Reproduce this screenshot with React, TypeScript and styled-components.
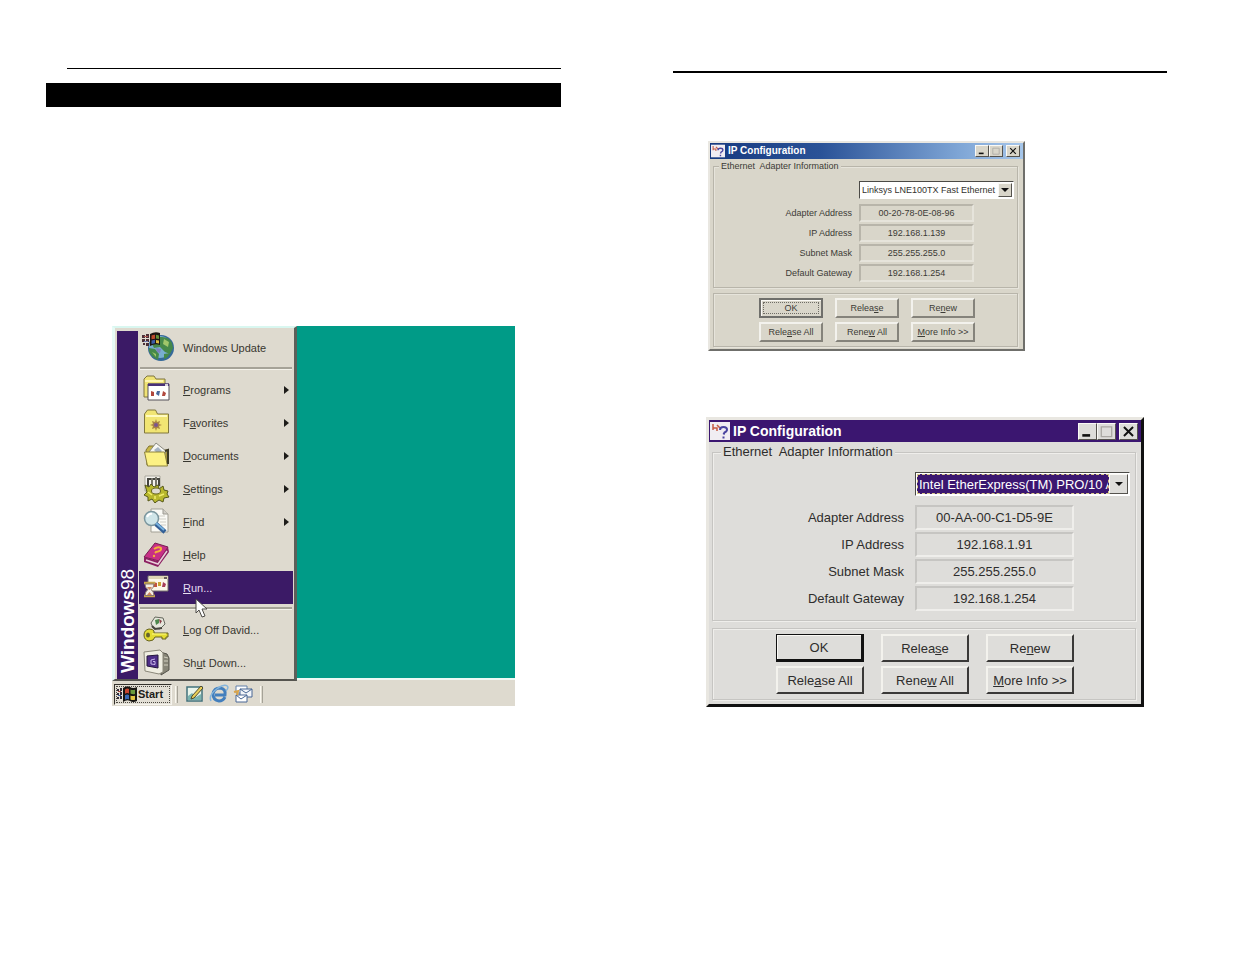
import React from "react";
import styled, { createGlobalStyle, css } from "styled-components";

const GlobalStyle = createGlobalStyle`
  * { box-sizing: border-box; }
  body {
    margin: 0;
    background: #fff;
    color: #2b2b2b;
    font-family: "Liberation Sans", Arial, sans-serif;
  }
  button, input, select { font: inherit; color: inherit; margin: 0; }
`;

/* ---------- document page ---------- */

const Spread = styled.main`
  display: grid;
  grid-template-columns: minmax(0, 515fr) minmax(0, 494fr);
  column-gap: 112px;
  padding: 68px 68px 68px 46px;
`;

const Sheet = styled.section`
  display: flex;
  flex-direction: column;
  align-items: flex-start;
`;

const Rule = styled.hr<{ $weight: number; $indent?: number; $drop?: number }>`
  align-self: stretch;
  border: 0;
  height: ${(p) => p.$weight}px;
  margin: ${(p) => p.$drop ?? 0}px 0 0 ${(p) => p.$indent ?? 0}px;
  background: #000;
`;

const Banner = styled.div`
  align-self: stretch;
  height: 24px;
  margin-top: 14px;
  background: #000;
`;

/* ---------- Windows 98 desktop ---------- */

const Desktop = styled.div`
  width: 403px;
  margin: 219px 0 0 66px;
  background: #009b87;
`;

const Menu = styled.nav`
  position: relative;
  z-index: 1;
  display: flex;
  width: 185px;
  margin-bottom: -3px;
  padding: 3px 1px 0 2px;
  background: #dedacf;
  border-style: solid;
  border-width: 2px 3px 2px 3px;
  border-color: #d9f7f0 #5d5f5a #55544f #e6fbf6;
`;

const MenuStrip = styled.div`
  display: flex;
  width: 21px;
  padding-top: 6px;
  background: #3b1a66;
  color: #fff;
  font-size: 19px;
  line-height: 21px;
  writing-mode: vertical-rl;
  transform: rotate(180deg);
  white-space: nowrap;
`;

const MenuList = styled.ul`
  flex: 1;
  margin: 0;
  padding: 0 0 0 1px;
  list-style: none;
`;

const MenuSeparator = styled.li`
  height: 9px;
  padding: 3px 1px 0;
  &::before {
    content: "";
    display: block;
    height: 2px;
    background: #a5a297;
    border-bottom: 1px solid #f4f2ea;
  }
`;

const MenuButton = styled.button<{ $active?: boolean }>`
  display: flex;
  align-items: center;
  width: 100%;
  height: 33px;
  padding: 0 4px 0 3px;
  border: 0;
  background: ${(p) => (p.$active ? "#3b1a66" : "transparent")};
  color: ${(p) => (p.$active ? "#e6dff2" : "#38372f")};
  font-size: 11px;
  text-align: left;
`;

const IconArt = styled.svg`
  overflow: visible;
`;

const MenuText = styled.span`
  flex: 1;
  padding-left: 11px;
  white-space: nowrap;
`;

const Pointer = styled.svg`
  position: absolute;
  left: 80px;
  top: 270px;
`;

const Taskbar = styled.div`
  display: flex;
  align-items: center;
  height: 28px;
  padding: 2px 2px 0;
  border-top: 2px solid #edfaf5;
  background: #dedacf;
`;

const StartButton = styled.button`
  display: flex;
  align-items: center;
  gap: 1px;
  width: 58px;
  height: 21px;
  padding: 0 2px;
  border: 1px solid #33312c;
  border-right-color: #f6f4ee;
  border-bottom-color: #f6f4ee;
  outline: 1px dotted #4a4842;
  outline-offset: -3px;
  background: #e3dfd5;
  color: #1d1c19;
  font-size: 11px;
  font-weight: 700;
`;

const Divider = styled.span`
  width: 3px;
  height: 17px;
  margin: 0 7px 0 3px;
  border-left: 1px solid #faf8f0;
  border-right: 1px solid #a5a297;
`;

const QuickButton = styled.button`
  width: 20px;
  height: 20px;
  margin-right: 4px;
  padding: 0;
  border: 0;
  background: none;
  svg { display: block; }
`;

/* ---------- IP Configuration window ---------- */

type Metrics = {
  width: number; frame: number; text: number; titleText: number; titleHeight: number;
  icon: number; control: number; controlHeight: number; legend: number; legendPad: number;
  selectTop: number; selectHeight: number; selectWidth: number; selectGap: number;
  label: number; labelGap: number; field: number; row: number; rowGap: number;
  groupEnd: number; groupGap: number; buttonTop: number; buttonLeft: number;
  buttonWidth: number; buttonHeight: number; buttonGap: number; end: number;
  face: string; title: string; edge: string; lowlight: string; groove: string; highlight: string; ink: string;
};

const compact: Metrics = {
  width: 317, frame: 2, text: 9, titleText: 10, titleHeight: 16,
  icon: 14, control: 14, controlHeight: 12, legend: 12, legendPad: 5,
  selectTop: 9, selectHeight: 18, selectWidth: 155, selectGap: 5,
  label: 137, labelGap: 7, field: 115, row: 18, rowGap: 2,
  groupEnd: 5, groupGap: 4, buttonTop: 4, buttonLeft: 45,
  buttonWidth: 64, buttonHeight: 20, buttonGap: 12, end: 2,
  face: "#d9d6ca", title: "linear-gradient(90deg, #173a80 0%, #2a5297 35%, #7fa6d6 80%, #a6c6ea 100%)",
  edge: "#6f6f6b", lowlight: "#85837b", groove: "#b8b5aa", highlight: "#e6e4db", ink: "#3c3b36",
};

const roomy: Metrics = {
  width: 438, frame: 3, text: 13, titleText: 14, titleHeight: 22,
  icon: 20, control: 19, controlHeight: 17, legend: 18, legendPad: 8,
  selectTop: 11, selectHeight: 24, selectWidth: 215, selectGap: 9,
  label: 190, labelGap: 11, field: 159, row: 25, rowGap: 2,
  groupEnd: 9, groupGap: 6, buttonTop: 5, buttonLeft: 63,
  buttonWidth: 88, buttonHeight: 28, buttonGap: 17, end: 4,
  face: "#dedddA", title: "#3b1670",
  edge: "#111", lowlight: "#3a3938", groove: "#c6c5c2", highlight: "#efeeeb", ink: "#2e2d2c",
};

type M = { $m: Metrics };

const Dialog = styled.form<M & { $top: number; $left: number }>`
  width: ${(p) => p.$m.width}px;
  max-width: 100%;
  margin: ${(p) => p.$top}px 0 0 ${(p) => p.$left}px;
  padding-bottom: ${(p) => p.$m.end}px;
  border: ${(p) => p.$m.frame}px solid ${(p) => p.$m.edge};
  border-top-color: #e9e7e1;
  border-left-color: #e9e7e1;
  background: ${(p) => p.$m.face};
  color: ${(p) => p.$m.ink};
  font-size: ${(p) => p.$m.text}px;
`;

const TitleBar = styled.header<M>`
  display: flex;
  align-items: center;
  height: ${(p) => p.$m.titleHeight}px;
  padding: 0 3px 0 1px;
  background: ${(p) => p.$m.title};
  color: #fff;
  svg { display: block; }
`;

const Title = styled.h2<M>`
  flex: 1;
  margin: 0 0 0 3px;
  font-size: ${(p) => p.$m.titleText}px;
  line-height: ${(p) => p.$m.titleHeight}px;
`;

const raised = css`
  border-style: solid;
  border-width: 1px;
  border-color: #faf9f5 #55534e #55534e #faf9f5;
`;

const ControlButton = styled.button<M & { $apart?: boolean }>`
  ${raised}
  display: grid;
  place-items: center;
  width: ${(p) => p.$m.control}px;
  height: ${(p) => p.$m.controlHeight}px;
  margin-left: ${(p) => (p.$apart ? 3 : 0)}px;
  padding: 0;
  background: ${(p) => p.$m.face};
`;

/* An etched frame: a shaded line with a lit line beside it. */
const etched = css<M>`
  border: 1px solid ${(p) => p.$m.groove};
  box-shadow: 1px 1px ${(p) => p.$m.highlight}, inset 1px 1px ${(p) => p.$m.highlight};
`;

const Group = styled.fieldset<M>`
  ${etched}
  min-width: 0;
  margin: 1px 5px 0 3px;
  padding: ${(p) => p.$m.selectTop}px 0 ${(p) => p.$m.groupEnd}px 1px;
`;

const Legend = styled.legend<M>`
  margin-left: ${(p) => p.$m.legendPad - 1}px;
  padding: 0 2px;
  background: ${(p) => p.$m.face};
  line-height: ${(p) => p.$m.legend}px;
  white-space: pre;
`;

const ComboBox = styled.div<M>`
  display: flex;
  width: ${(p) => p.$m.selectWidth}px;
  height: ${(p) => p.$m.selectHeight}px;
  margin-left: ${(p) => p.$m.label + p.$m.labelGap}px;
  margin-bottom: ${(p) => p.$m.selectGap}px;
  padding: 1px;
  border: 1px solid #4b4a46;
  border-right-color: #fff;
  border-bottom-color: #fff;
  background: #fff;
`;

const AdapterSelect = styled.select<{ $picked: boolean }>`
  appearance: none;
  flex: 1;
  min-width: 0;
  padding: 0 0 0 1px;
  border: ${(p) => (p.$picked ? "1px dashed #d8c98a" : "0")};
  border-radius: 0;
  background: ${(p) => (p.$picked ? "#3b1670" : "#fff")};
  color: ${(p) => (p.$picked ? "#fff" : "#33322e")};
  text-overflow: clip;
`;

const DropArrow = styled.span<M>`
  ${raised}
  display: grid;
  place-items: center;
  width: ${(p) => p.$m.control}px;
  background: ${(p) => p.$m.face};
`;

const Field = styled.div<M>`
  display: flex;
  align-items: center;
  gap: ${(p) => p.$m.labelGap}px;
  margin-bottom: ${(p) => p.$m.rowGap}px;
  &:last-child { margin-bottom: 0; }
`;

const Label = styled.label<M>`
  width: ${(p) => p.$m.label}px;
  text-align: right;
`;

const Value = styled.input<M>`
  width: ${(p) => p.$m.field}px;
  height: ${(p) => p.$m.row}px;
  padding: 0;
  border: 2px solid ${(p) => p.$m.highlight};
  border-top-color: ${(p) => p.$m.groove};
  border-left-color: ${(p) => p.$m.groove};
  border-radius: 0;
  background: transparent;
  text-align: center;
`;

const Actions = styled.div<M>`
  ${etched}
  display: grid;
  grid-template-columns: repeat(3, ${(p) => p.$m.buttonWidth}px);
  gap: 4px ${(p) => p.$m.buttonGap}px;
  margin: ${(p) => p.$m.groupGap + 1}px 5px 0 3px;
  padding: ${(p) => p.$m.buttonTop}px 0 ${(p) => p.$m.buttonTop}px ${(p) => p.$m.buttonLeft}px;
`;

const ActionButton = styled.button<M & { $main?: boolean }>`
  height: ${(p) => p.$m.buttonHeight}px;
  padding: 0;
  border-style: solid;
  border-width: 2px;
  border-color: #f3f2ed ${(p) => p.$m.lowlight} ${(p) => p.$m.lowlight} #f3f2ed;
  background: ${(p) => p.$m.face};
  white-space: nowrap;
  ${(p) => p.$main && css`
    border-color: ${p.$m.edge};
    border-width: 1px 3px 3px 1px;
    box-shadow: inset 1px 1px #faf9f5;
  `}
  ${(p) => p.$main && p.$m === compact && css`
    border-width: 2px;
    outline: 1px dotted #6f6d66;
    outline-offset: -5px;
  `}
`;

/* ---------- drawings ---------- */

const Flag = ({ size }: { size: number }) => (
  <svg width={size} height={size} viewBox="0 0 20 20" aria-hidden="true">
    <path d="M6 4q4-3 7-1t7 0v14q-4 2-7 0t-7 1z" fill="#171512" />
    <path d="M8 5.500q2-1.500 4-.5v4.500q-2-1-4 .2z" fill="#c9452f" />
    <path d="M13.500 5.500q2 1 4.500.3v4.200q-2.500.6-4.500-.4z" fill="#6b9a3c" />
    <path d="M8 11.200q2-1.300 4-.3v4.500q-2-1-4 .3z" fill="#3968b4" />
    <path d="M13.500 11.500q2 1 4.500.2v4q-2.500.8-4.500-.2z" fill="#e2c441" />
    <path d="M0 5h2v2H0zM3 4h2v3H3zM0 9h2v2H0zM3 8h2v3H3zM0 13h2v2H0zM3 12h2v3H3z" fill="#302a35" />
    <path d="M1 7h3v1H1z" fill="#a63a35" /><path d="M1 11h3v1H1z" fill="#38599d" />
  </svg>
);

const icons: Record<string, React.ReactNode> = {
  update: <>
    <circle cx="19" cy="15" r="13" fill="#35699a" />
    <circle cx="18" cy="14" r="11" fill="#78aed0" />
    <path d="M18 4q9-1 12 6l1 5-3 6-5-2-5-5-6 1-2-4zM7 15l6 1 4 5-1 6q-7-3-9-9zM22 21l6-1q-2 5-6 6z" fill="#46894a" />
    <path d="M22 6l5 3-1 5-5-3zM10 19l4 2v3z" fill="#a0c66a" />
    <path d="M14 15l5 1-1 4-3-1z" fill="#7f82bd" />
    <path d="M8 1q5-3 10-1v12q-5-2-10 1z" fill="#1b1613" />
    <path d="M9.500 2.500q2-1 3.500-.8v4l-3.500.6z" fill="#bc4a2c" /><path d="M14 1.800l3 .7v3.500l-3-.4z" fill="#658f37" />
    <path d="M9.500 7.500l3.500-.7v3.500l-3.500.6z" fill="#3c5ca6" /><path d="M14 6.900l3 .5v3l-3-.5z" fill="#d8ba40" />
    <path d="M0 2h3v3H0zM4 1h3v4H4zM0 6h3v3H0zM4 6h3v3H4zM1 10h2v2H1zM4 10h3v3H4z" fill="#4b3038" />
    <path d="M2 3h4v1H2z" fill="#b0544e" /><path d="M2 8h4v1H2z" fill="#6e76ab" />
  </>,
  programs: <>
    <path d="M2 4l3-3h7l2 3h9v6H13v12H2z" fill="#f0e375" stroke="#7e7540" />
    <path d="M3 5h18v2H3z" fill="#fff6b0" />
    <path d="M6 9h21v16H6z" fill="#fff" stroke="#55505a" />
    <path d="M6 8.500h21v2.500H6z" fill="#493078" /><path d="M23 9h3v2h-3z" fill="#d8d5dc" />
    <path d="M9 16l3 1v4H9z" fill="#b0473d" /><path d="M15 16h3l-1 5-3-2z" fill="#48699d" /><path d="M21 16l3 2-1 3h-3z" fill="#b1493f" />
  </>,
  favorites: <>
    <path d="M2.500 6l3-4h8l2 4h11v19h-24z" fill="#f1e573" stroke="#80773e" />
    <path d="M4 8h21" stroke="#fffbc0" strokeWidth="2" />
    <path d="M14 11l1 3 3-1-1 3 3 1-3 1 1 3-3-1-1 3-1-3-3 1 1-3-3-1 3-1-1-3 3 1z" fill="#a98544" />
    <circle cx="14" cy="17" r="2" fill="#7b5590" />
  </>,
  documents: <>
    <path d="M4 9l3-4h6l3 4h9v15H5z" fill="#c9b847" stroke="#807332" />
    <path d="M7 11l7-9 10 8-2 5H8z" fill="#f7f7f3" stroke="#8b8b80" /><path d="M12 9l4-3 4 4-4 3z" fill="#a5b3c2" />
    <path d="M2.500 11h20l3 14h-20z" fill="#fcf184" stroke="#8b813d" /><path d="M23 10l3-1v14" fill="none" stroke="#3b3925" strokeWidth="2" />
  </>,
  settings: <>
    <path d="M3 2h15v15H3z" fill="#f4f3ed" stroke="#aaa89d" />
    <path d="M6 13V5h11v7" fill="none" stroke="#45453e" strokeWidth="2" /><path d="M10 4v10M14 3v11" stroke="#77766c" strokeWidth="2" />
    <path d="M3 11l4 2 2-3 3 3 4-2 1 4 4-3 1 4 4 1-1 3 2 3-5 1-1 4-4-2-3 2-1 1-3-4-4 2v-4l-4-2 3-3z" fill="#b8b82c" stroke="#56581b" />
    <ellipse cx="14" cy="17" rx="4.500" ry="3" fill="#dedacf" stroke="#666422" />
    <path d="M6 18l4 3M17 22l5-2M13 25v-3" stroke="#f1ed6b" strokeWidth="1.500" />
  </>,
  find: <>
    <path d="M9 2h12l5 5v18H9z" fill="#fafaf5" stroke="#a19f95" /><path d="M21 2v5h5" fill="#d1cfc8" stroke="#9c9a91" />
    <path d="M16 9h7M17 12h7M18 15h6M19 18h5" stroke="#cfcec6" />
    <circle cx="9.500" cy="11.500" r="7" fill="#cfe5e8" stroke="#7b969e" strokeWidth="1.500" /><path d="M5 10q2-4 5-3" stroke="#fff" strokeWidth="2" fill="none" />
    <path d="M14 17l9 8" stroke="#335f96" strokeWidth="4.500" /><path d="M14 16l8 7" stroke="#78b3df" strokeWidth="2" />
  </>,
  help: <>
    <path d="M2 17L13 3l13 4-9 14z" fill="#c82f86" stroke="#74204f" />
    <path d="M2 17v5l14 5 11-15-1-5-10 14z" fill="#8c1f61" /><path d="M4 20l12 4 9-13" stroke="#e9cfd9" strokeWidth="1.500" fill="none" />
    <path d="M12 9q4-3 7-1 1 3-5 4l-1 1" fill="none" stroke="#f3b03b" strokeWidth="2" /><circle cx="12" cy="16" r="1.200" fill="#f3b03b" />
  </>,
  run: <>
    <path d="M6 3h20v15H6z" fill="#fbf7e8" stroke="#77736c" /><path d="M7 3h19v3H7z" fill="#ded5b4" /><path d="M22 4h3v2h-3z" fill="#685d5b" />
    <path d="M12 9l3 1v4h-3z" fill="#c0543e" /><path d="M16 9h3v4h-3z" fill="#c9a334" /><path d="M21 9l3 2-1 3h-3z" fill="#a63d58" />
    <path d="M2 10h11M2 23h11" stroke="#c5a54b" strokeWidth="2.500" /><path d="M3 11h9q0 4-3 5.500 3 2 3 6H3q0-4 3-6-3-1.500-3-5.500z" fill="#f4eee6" stroke="#89776c" />
    <path d="M5 14h5l-2.500 3zM5 22l2.500-3 2.500 3z" fill="#ce855c" />
  </>,
  logoff: <>
    <path d="M9 8l4-6 8 1 2 6-5 5-7-1z" fill="#e5e6dc" stroke="#65675d" /><path d="M13 5l4-1v4l-3 2z" fill="#4c874c" /><path d="M17 4l3 2-2 3z" fill="#883c45" />
    <path d="M10 11l3 3 7-1" fill="none" stroke="#46453d" strokeWidth="2" />
    <path d="M12 18h14v4h-2v2h-4v-2h-7q-1 4-6 4-5-1-5-6 0-5 5-6 4 0 5 2z" fill="#e3dc32" stroke="#65611e" />
    <path d="M10 19h14" stroke="#fffb88" /><ellipse cx="6" cy="20" rx="2" ry="2.500" fill="#66642a" />
  </>,
  shutdown: <>
    <path d="M18 4l7 2 2 4v12l-8 5z" fill="#878577" stroke="#54524a" /><path d="M2 4l16-2 3 3v19l-4 2-14-3z" fill="#f0eee2" stroke="#8b887a" />
    <path d="M5 8l11-1v13L5 18z" fill="#4e2e88" stroke="#24163d" /><path d="M13 11l-4 1v4l4 .5v-3h-2" fill="none" stroke="#c9b6e9" />
    <path d="M22 9l4 1M22 13h4M22 17h4" stroke="#d3d0c1" />
  </>,
};

const MenuIcon = ({ name }: { name: string }) => (
  <IconArt width="30" height="30" viewBox="0 0 30 30" aria-hidden="true">{icons[name]}</IconArt>
);

const AppMark = ({ size }: { size: number }) => (
  <svg width={size} height={size} viewBox="0 0 20 20" aria-hidden="true">
    <path d="M0 1h20v18H0z" fill="#f0edf2" />
    <path d="M3 3v6M3 7h4v3M7 4l3 3" stroke="#c55a43" strokeWidth="1.500" fill="none" />
    <path d="M10 9q0-3 3.500-3t3.500 2.500q0 2-2.500 3l-1 2M13.500 15.500v2" stroke="#4a45a0" strokeWidth="2" fill="none" />
  </svg>
);

/* ---------- Start menu ---------- */

type Entry = { icon: string; before?: string; key?: string; after: string; sub?: boolean; active?: boolean };

const groups: Entry[][] = [
  [{ icon: "update", after: "Windows Update" }],
  [
    { icon: "programs", key: "P", after: "rograms", sub: true },
    { icon: "favorites", before: "F", key: "a", after: "vorites", sub: true },
    { icon: "documents", key: "D", after: "ocuments", sub: true },
    { icon: "settings", key: "S", after: "ettings", sub: true },
    { icon: "find", key: "F", after: "ind", sub: true },
    { icon: "help", key: "H", after: "elp" },
    { icon: "run", key: "R", after: "un...", active: true },
  ],
  [
    { icon: "logoff", key: "L", after: "og Off David..." },
    { icon: "shutdown", before: "Sh", key: "u", after: "t Down..." },
  ],
];

const StartMenu = () => (
  <Menu aria-label="Start menu">
    <MenuStrip><b>Windows</b>98</MenuStrip>
    <MenuList>
      {groups.map((group, g) => (
        <React.Fragment key={g}>
          {g > 0 && <MenuSeparator role="separator" />}
          {group.map((e) => (
            <li key={e.icon}>
              <MenuButton type="button" $active={e.active}>
                <MenuIcon name={e.icon} />
                <MenuText>{e.before}{e.key && <u>{e.key}</u>}{e.after}</MenuText>
                {e.sub && <svg width="5" height="8" viewBox="0 0 5 8" aria-hidden="true"><path d="M0 0l5 4-5 4z" fill="#1d1c19" /></svg>}
              </MenuButton>
            </li>
          ))}
        </React.Fragment>
      ))}
    </MenuList>
    <Pointer width="13" height="20" viewBox="0 0 13 20" aria-hidden="true">
      <path d="M1 1v14l3-3 3 7 3-1-3-7h5z" fill="#fff" stroke="#4b4945" />
    </Pointer>
  </Menu>
);

const DesktopTaskbar = () => (
  <Taskbar>
    <StartButton type="button"><Flag size={20} />Start</StartButton>
    <Divider />
    <QuickButton type="button" aria-label="Show Desktop">
      <svg width="20" height="20" viewBox="0 0 20 20"><path d="M2 3h15v14H2z" fill="#e9f4eb" stroke="#42717c" strokeWidth="1.500" /><path d="M3 12l4-3 4 4 5-3v6H3z" fill="#79b4b0" /><path d="M7 12l9-10 2 2-9 10-3 1z" fill="#e9cf59" stroke="#514b2c" /></svg>
    </QuickButton>
    <QuickButton type="button" aria-label="Internet Explorer">
      <svg width="20" height="20" viewBox="0 0 20 20"><path d="M16 13q-2 4-6 4-6-1-6-7 1-6 7-6 6 1 5 7H6" fill="none" stroke="#437fbd" strokeWidth="3" /><path d="M2 17Q-1 11 9 4q8-5 10-1 0 2-2 4" fill="none" stroke="#85b5dc" strokeWidth="1.500" /></svg>
    </QuickButton>
    <QuickButton type="button" aria-label="Outlook Express">
      <svg width="20" height="20" viewBox="0 0 20 20"><path d="M3 2h11v7H3z" fill="#fff" stroke="#6380aa" /><path d="M7 5h12v8H7z" fill="#f3f6fa" stroke="#486795" /><path d="M7 5l6 4 6-4" fill="none" stroke="#486795" /><path d="M3 11h11v7H3z" fill="#fff" stroke="#486795" /><path d="M3 11l5 4 6-4" fill="none" stroke="#486795" /><path d="M1 8l4-1-1 4" fill="none" stroke="#dba448" strokeWidth="2" /></svg>
    </QuickButton>
    <Divider />
  </Taskbar>
);

/* ---------- IP Configuration ---------- */

type IpProps = { id: string; m: Metrics; top: number; left: number; adapter: string; values: string[]; picked?: boolean };

const fieldNames = ["Adapter Address", "IP Address", "Subnet Mask", "Default Gateway"];

const IpConfiguration = ({ id, m, top, left, adapter, values, picked = false }: IpProps) => {
  const glyph = m.controlHeight - 4;
  return (
    <Dialog $m={m} $top={top} $left={left} aria-labelledby={`${id}-title`} onSubmit={(e) => e.preventDefault()}>
      <TitleBar $m={m}>
        <AppMark size={m.icon} />
        <Title $m={m} id={`${id}-title`}>IP Configuration</Title>
        <ControlButton $m={m} type="button" aria-label="Minimize">
          <svg width={glyph} height={glyph} viewBox="0 0 10 10"><path d="M1 8h6" stroke="#111" strokeWidth="2" /></svg>
        </ControlButton>
        <ControlButton $m={m} type="button" aria-label="Maximize" disabled>
          <svg width={glyph} height={glyph} viewBox="0 0 10 10"><path d="M1 1.500h8v7.500H1z" fill="none" stroke="#aaa8a3" /></svg>
        </ControlButton>
        <ControlButton $m={m} type="button" aria-label="Close" $apart>
          <svg width={glyph} height={glyph} viewBox="0 0 10 10"><path d="M1.500 1.500l7 7M8.500 1.500l-7 7" stroke="#111" strokeWidth="1.500" /></svg>
        </ControlButton>
      </TitleBar>
      <Group $m={m}>
        <Legend $m={m}>{"Ethernet  Adapter Information"}</Legend>
        <ComboBox $m={m}>
          <AdapterSelect $picked={picked} aria-label="Ethernet adapter" defaultValue={adapter}>
            <option>{adapter}</option>
          </AdapterSelect>
          <DropArrow $m={m}>
            <svg width="8" height="4" viewBox="0 0 8 4" aria-hidden="true"><path d="M0 0h8L4 4z" fill="#111" /></svg>
          </DropArrow>
        </ComboBox>
        {fieldNames.map((name, i) => (
          <Field $m={m} key={name}>
            <Label $m={m} htmlFor={`${id}-${i}`}>{name}</Label>
            <Value $m={m} id={`${id}-${i}`} value={values[i]} readOnly />
          </Field>
        ))}
      </Group>
      <Actions $m={m}>
        <ActionButton $m={m} $main type="submit">OK</ActionButton>
        <ActionButton $m={m} type="button">Relea<u>s</u>e</ActionButton>
        <ActionButton $m={m} type="button">Re<u>n</u>ew</ActionButton>
        <ActionButton $m={m} type="button">Rele<u>a</u>se All</ActionButton>
        <ActionButton $m={m} type="button">Rene<u>w</u> All</ActionButton>
        <ActionButton $m={m} type="button"><u>M</u>ore Info &gt;&gt;</ActionButton>
      </Actions>
    </Dialog>
  );
};

export default function App() {
  return (
    <>
      <GlobalStyle />
      <Spread>
        <Sheet>
          <Rule $weight={1} $indent={21} />
          <Banner />
          <Desktop>
            <StartMenu />
            <DesktopTaskbar />
          </Desktop>
        </Sheet>
        <Sheet>
          <Rule $weight={2} $drop={3} />
          <IpConfiguration
            id="linksys" m={compact} top={68} left={35}
            adapter="Linksys LNE100TX Fast Ethernet"
            values={["00-20-78-0E-08-96", "192.168.1.139", "255.255.255.0", "192.168.1.254"]}
          />
          <IpConfiguration
            id="intel" m={roomy} top={66} left={33} picked
            adapter="Intel EtherExpress(TM) PRO/10 A"
            values={["00-AA-00-C1-D5-9E", "192.168.1.91", "255.255.255.0", "192.168.1.254"]}
          />
        </Sheet>
      </Spread>
    </>
  );
}
